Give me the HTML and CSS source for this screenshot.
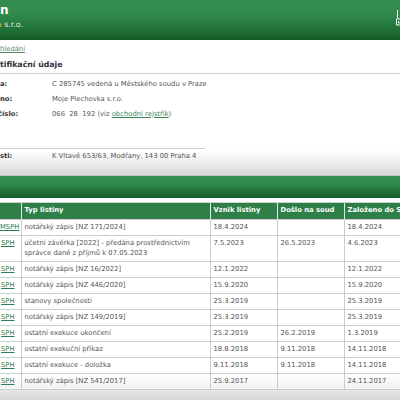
FILE: index.html
```html
<!DOCTYPE html>
<html lang="cs">
<head>
<meta charset="utf-8">
<title>Sbírka listin</title>
<link rel="stylesheet" href="styles.css">
</head>
<body>
<div class="page">
  <header class="top">
    <div class="brand">
      <div class="title">n</div>
      <div class="subtitle"><span class="hl">a</span> s.r.o.</div>
    </div>
    <svg class="logo" width="6" height="16" viewBox="0 0 6 16"><path d="M1.5 0 V8.5 M0.5 9 H6 M0.5 9 V15 H6 M2.5 11 V13 H6" fill="none" stroke="#fff" stroke-width="1"/></svg>
  </header>

  <div class="back"><a href="#">hledání</a></div>

  <h2 class="sec">tifikační údaje</h2>
  <div class="info">
    <div class="row"><span class="lab">a:</span><span class="val">C 285745 vedená u Městského soudu v Praze</span></div>
    <div class="row"><span class="lab">no:</span><span class="val">Moje Plechovka s.r.o.</span></div>
    <div class="row"><span class="lab cut">číslo:</span><span class="val">066&nbsp; 28&nbsp; 192 (viz <a href="#">obchodní rejstřík</a>)</span></div>
  </div>

  <div class="rule"></div>
  <div class="band">
    <div class="row"><span class="lab">sti:</span><span class="val">K Vltavě 653/63, Modřany, 143 00 Praha 4</span></div>
  </div>
  <div class="greenbar"></div>

  <table class="list">
    <colgroup><col class="c1"><col class="c2"><col class="c3"><col class="c4"><col class="c5"></colgroup>
    <thead>
      <tr><th></th><th>Typ listiny</th><th>Vznik listiny</th><th>Došlo na soud</th><th>Založeno do Sbírky listin</th></tr>
    </thead>
    <tbody>
      <tr><td class="id"><a href="#">MSPH</a></td><td>notářský zápis [NZ 171/2024]</td><td>18.4.2024</td><td></td><td>18.4.2024</td></tr>
      <tr><td class="id s"><a href="#">SPH</a></td><td>účetní závěrka [2022] - předána prostřednictvím správce daně z příjmů k 07.05.2023</td><td>7.5.2023</td><td>26.5.2023</td><td>4.6.2023</td></tr>
      <tr><td class="id s"><a href="#">SPH</a></td><td>notářský zápis [NZ 16/2022]</td><td>12.1.2022</td><td></td><td>12.1.2022</td></tr>
      <tr><td class="id s"><a href="#">SPH</a></td><td>notářský zápis [NZ 446/2020]</td><td>15.9.2020</td><td></td><td>15.9.2020</td></tr>
      <tr><td class="id s"><a href="#">SPH</a></td><td>stanovy společnosti</td><td>25.3.2019</td><td></td><td>25.3.2019</td></tr>
      <tr><td class="id s"><a href="#">SPH</a></td><td>notářský zápis [NZ 149/2019]</td><td>25.3.2019</td><td></td><td>25.3.2019</td></tr>
      <tr><td class="id s"><a href="#">SPH</a></td><td>ostatní exekuce ukončení</td><td>25.2.2019</td><td>26.2.2019</td><td>1.3.2019</td></tr>
      <tr><td class="id s"><a href="#">SPH</a></td><td>ostatní exekuční příkaz</td><td>18.8.2018</td><td>9.11.2018</td><td>14.11.2018</td></tr>
      <tr><td class="id s"><a href="#">SPH</a></td><td>ostatní exekuce - doložka</td><td>9.11.2018</td><td>9.11.2018</td><td>14.11.2018</td></tr>
      <tr class="last"><td class="id s"><a href="#">SPH</a></td><td>notářský zápis [NZ 541/2017]</td><td>25.9.2017</td><td></td><td>24.11.2017</td></tr>
    </tbody>
  </table>
  <div class="foot"></div>
</div>
</body>
</html>
```

FILE: styles.css
```css
html, body {
  margin: 0;
  padding: 0;
  background: #fff;
}
body {
  width: 400px;
  height: 400px;
  overflow: hidden;
  font-family: "DejaVu Sans", Verdana, sans-serif;
  font-size: 6.8px;
  line-height: 10px;
  color: #555;
}
.page {
  width: 400px;
}
a {
  color: #3a7f55;
  text-decoration: underline;
}

.top {
  height: 40px;
  background: linear-gradient(#358e51 0%, #318b4d 35%, #1d6c35 80%, #115a27 100%);
  display: flex;
  justify-content: space-between;
  align-items: flex-start;
}
.brand {
  padding-top: 3px;
}
.title {
  font-size: 12px;
  line-height: 15px;
  font-weight: bold;
  color: #fff;
}
.subtitle {
  margin-top: 2px;
  margin-left: -3px;
  font-size: 7.8px;
  line-height: 10px;
  color: #e4ece6;
}
.subtitle .hl {
  color: #e2b43c;
}
.logo {
  margin-top: 10px;
  margin-right: -2px;
  display: block;
}

.back {
  padding-top: 4px;
  height: 10px;
}
.back a {
  color: #5c8a68;
}

.sec {
  margin: 6px 0 0;
  padding-bottom: 3px;
  font-size: 7.8px;
  line-height: 10px;
  font-weight: bold;
  color: #333;
  border-bottom: 1px solid #cfcfcf;
}

.info {
  padding-top: 2px;
}
.row {
  display: flex;
  padding: 2.5px 0;
}
.lab {
  width: 52px;
  flex: none;
  font-weight: bold;
  color: #333;
}
.lab.cut {
  margin-left: -2px;
  width: 54px;
}
.val {
  color: #555;
}

.rule {
  margin-top: 27px;
  width: 205px;
  border-top: 1px solid #cdcdcd;
}
.band {
  height: 26px;
  background: linear-gradient(#ffffff 0%, #f4f4f4 35%, #d6d6d6 100%);
  border-bottom: 1px solid #c2c2c2;
}
.band .row {
  padding: 1.5px 0;
}
.greenbar {
  height: 22px;
  background: linear-gradient(#348f51 0%, #2f8a4b 40%, #1b6a33 80%, #115a27 100%);
}

.list {
  margin-top: 4px;
  border-collapse: collapse;
  table-layout: fixed;
  width: 470px;
  line-height: 9.5px;
}
.c1 { width: 21px; }
.c2 { width: 189px; }
.c3 { width: 67px; }
.c4 { width: 67px; }
.c5 { width: 126px; }
.list th {
  background: #2f7f48;
  color: #fff;
  font-weight: bold;
  text-align: left;
  padding: 3px 3px 3.5px;
  border-left: 1px solid #dfe9e2;
  border-top: 1px solid #cfcfcf;
  white-space: nowrap;
  overflow: hidden;
}
.list th:first-child {
  border-left: none;
}
.list td {
  padding: 3px 3px 2.5px;
  vertical-align: top;
  border: 1px solid #cccccc;
  color: #555;
  overflow: hidden;
  white-space: normal;
}
.list td:first-child {
  border-left: none;
}
.list td.id {
  padding-left: 0;
  padding-right: 0;
  white-space: nowrap;
}
.list td.id.s {
  padding-left: 1px;
}
.list td.id a {
  color: #2f7f55;
}
.list tr.last td {
  background: linear-gradient(#ffffff, #f1f1f1);
}
.foot {
  height: 14px;
  background: linear-gradient(#e6e6e6, #d2d2d2);
}
```
